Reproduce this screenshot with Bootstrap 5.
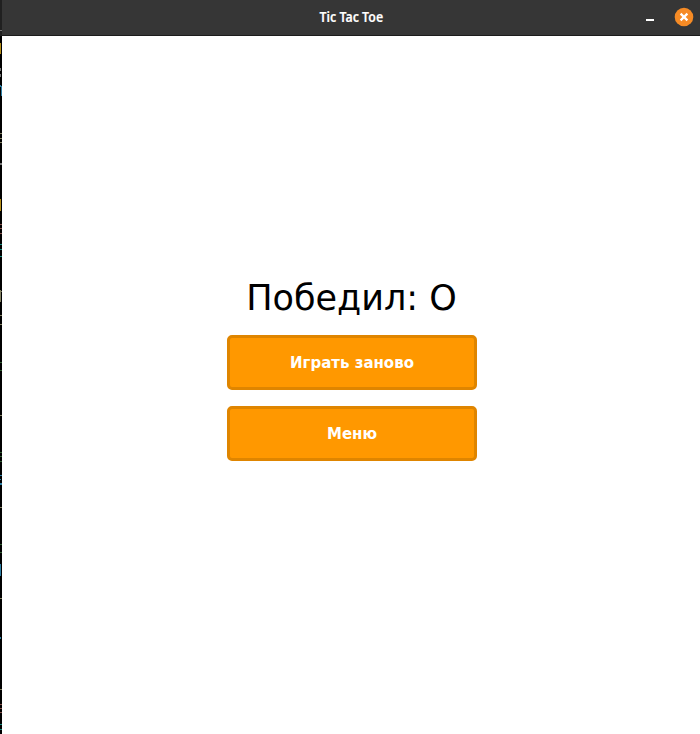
<!DOCTYPE html>
<html lang="ru">
<head>
<meta charset="utf-8">
<meta name="viewport" content="width=device-width, initial-scale=1">
<title>Tic Tac Toe</title>
<link href="https://cdn.jsdelivr.net/npm/bootstrap@5.3.0/dist/css/bootstrap.min.css" rel="stylesheet">
<style>
body { font-family: "DejaVu Sans", sans-serif; background: #000; }
.edge { width: 2px; }
.titlebar { height: 36px; background: #363636; border-bottom: 1px solid #1c1c1c; display: grid; grid-template-columns: 1fr auto 1fr; }
.win-title { font: 600 14.5px/32px "Noto Sans", sans-serif; color: #fff; transform: scaleX(.85); -webkit-text-stroke: .2px #fff; }
.win-buttons { gap: 16px; padding-right: 7px; height: 34px; }
.result { font-size: 35px; line-height: 42px; color: #000; margin-bottom: 16px; }
.btn-game { width: 250px; height: 55px; padding: 2px 0 0 1px; font-size: 15px; font-weight: 700; border-radius: 5px;
  --bs-btn-color: #fff; --bs-btn-bg: #ff9800; --bs-btn-border-color: #df8500; --bs-btn-border-width: 3px;
  --bs-btn-hover-color: #fff; --bs-btn-hover-bg: #ffa41f; --bs-btn-hover-border-color: #df8500; }
.game { padding: 241px 0 0 1px; }
</style>
</head>
<body class="vh-100 overflow-hidden">
<div class="d-flex h-100">
  <svg class="edge flex-shrink-0" height="734" viewBox="0 0 2 734" shape-rendering="crispEdges" aria-hidden="true">
    <path fill="#202020" d="M0 0h2v36h-2z"/>
    <path fill="#777" d="M0 30h2v1h-2zM0 68h1v3h-1zM0 74h1v3h-1zM0 163h2v2h-2z"/>
    <path fill="#b58e18" d="M0 43h1v11h-1zM0 199h1v12h-1z"/>
    <path fill="#2b7da3" d="M0 85h1v2h-1zM1 86h1v10h-1zM0 475h2v1h-2zM0 479h1v1h-1zM0 483h2v2h-2zM0 564h1v12h-1zM0 637h1v2h-1z"/>
    <path fill="#817f61" d="M0 133h2v1h-2zM0 138h2v1h-2zM0 142h2v1h-2zM0 290h1v12h-1zM1 291h1v1h-1zM0 315h2v1h-2zM0 324h2v1h-2zM0 415h2v1h-2zM0 507h2v1h-2zM0 598h2v1h-2zM0 689h2v1h-2z"/>
    <path fill="#84514a" d="M0 224h2v1h-2zM0 228h2v1h-2zM0 233h2v1h-2zM0 704h2v1h-2zM0 708h2v1h-2zM0 712h2v1h-2z"/>
    <path fill="#178a80" d="M0 244h2v1h-2zM0 249h2v1h-2zM0 256h2v1h-2zM0 724h2v1h-2zM0 729h2v1h-2z"/>
    <path fill="#2e5c30" d="M0 362h2v1h-2zM0 370h2v1h-2zM0 452h2v1h-2zM0 456h2v1h-2zM0 461h2v1h-2zM0 544h2v1h-2zM0 552h2v1h-2z"/>
  </svg>
  <div class="d-flex flex-column flex-grow-1 bg-white">
    <header class="titlebar">
      <span></span>
      <span class="win-title">Tic Tac Toe</span>
      <div class="win-buttons d-flex align-items-center justify-content-end">
        <svg width="18" height="18" viewBox="0 0 18 18" role="img" aria-label="Свернуть"><path d="M5 11h8v2H5z" fill="#fff"/></svg>
        <svg width="18" height="18" viewBox="0 0 18 18" overflow="visible" role="img" aria-label="Закрыть"><circle cx="9" cy="9" r="9.3" fill="#f68b25"/><path d="M5.6 5.6l6.8 6.8M12.4 5.6l-6.8 6.8" stroke="#fff" stroke-width="2.2"/></svg>
      </div>
    </header>
    <main class="game d-flex flex-column align-items-center flex-grow-1">
      <div class="result">Победил: O</div>
      <div class="d-flex flex-column gap-3">
        <button type="button" class="btn btn-game">Играть заново</button>
        <button type="button" class="btn btn-game">Меню</button>
      </div>
    </main>
  </div>
</div>
<script src="https://cdn.jsdelivr.net/npm/bootstrap@5.3.0/dist/js/bootstrap.bundle.min.js"></script>
</body>
</html>
